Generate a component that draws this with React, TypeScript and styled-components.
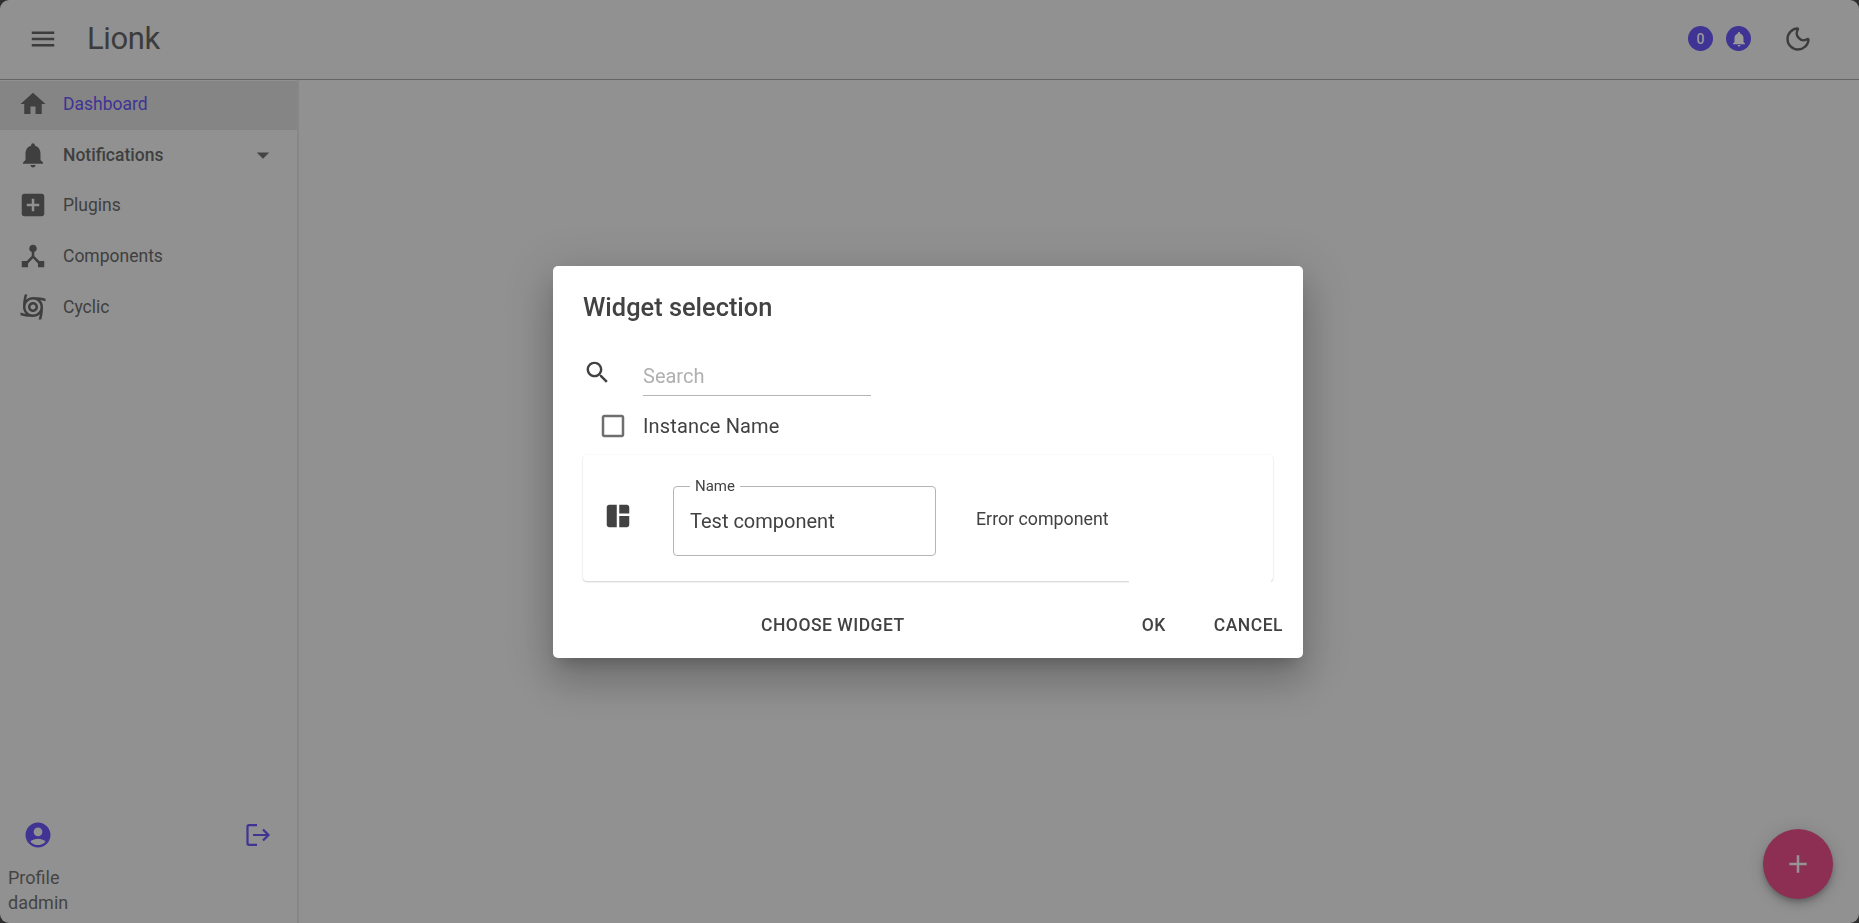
import React from "react";
import styled, { createGlobalStyle } from "styled-components";
import { Moon } from "lucide-react";

const GlobalStyle = createGlobalStyle`
  html, body {
    margin: 0;
    padding: 0;
    height: 100%;
    overflow: hidden;
    background: #2e2e2e;
  }
  * { box-sizing: border-box; }
  body {
    font-family: Roboto, "Liberation Sans", sans-serif;
  }
`;

const Page = styled.div`
  width: 1859px;
  height: 923px;
  display: flex;
  flex-direction: column;
  background: #919191;
  color: #3c3c3c;
  border-radius: 9px;
  overflow: hidden;
`;

const TopBar = styled.header`
  height: 80px;
  flex: none;
  display: flex;
  align-items: center;
  padding: 0 47px 2px 28px;
  border-bottom: 1px solid #656565;
`;

const Brand = styled.div`
  font-size: 31px;
  letter-spacing: -0.4px;
  font-weight: 400;
  margin-left: 29px;
  flex: 1;
`;

const Badge = styled.div`
  width: 25px;
  height: 25px;
  border-radius: 50%;
  background: #3f3394;
  color: #9a9a9a;
  font-size: 14px;
  font-weight: 500;
  display: flex;
  align-items: center;
  justify-content: center;
  margin-right: 13px;
`;

const ThemeButton = styled.div`
  width: 28px;
  height: 28px;
  margin-left: 20px;
  display: flex;
`;

const Body = styled.div`
  flex: 1;
  display: flex;
  min-height: 0;
`;

const Sidebar = styled.aside`
  width: 299px;
  flex: none;
  display: flex;
  flex-direction: column;
  border-right: 2px solid #878787;
  padding-top: 1px;
`;

const NavItem = styled.div<{ $active?: boolean; $bold?: boolean; $height?: number }>`
  height: ${(p) => p.$height ?? 51}px;
  display: flex;
  align-items: center;
  padding: 0 19px ${(p) => (p.$active ? 4 : 1)}px 18px;
  background: ${(p) => (p.$active ? "#858585" : "transparent")};
  color: ${(p) => (p.$active ? "#3f3394" : "#3f3f3f")};
  font-size: 17.5px;
  font-weight: ${(p) => (p.$bold ? 500 : 400)};
`;

const NavLabel = styled.span`
  margin-left: 15px;
  flex: 1;
`;

const SidebarFooter = styled.div`
  margin-top: auto;
  padding: 0 8px 8px;
  font-size: 18px;
  line-height: 25px;
  color: #444444;
`;

const FooterIcons = styled.div`
  display: flex;
  align-items: center;
  justify-content: space-between;
  padding: 0 17px 15px 15px;
  color: #3f3394;
`;

const Backdrop = styled.div`
  position: fixed;
  inset: 0;
  display: flex;
  align-items: center;
  justify-content: center;
  padding: 1px 3px 0 0;
`;

const Dialog = styled.section`
  width: 750px;
  height: 392px;
  background: #ffffff;
  border-radius: 5px;
  color: #424242;
  padding: 0 20px 0 30px;
  display: flex;
  flex-direction: column;
  box-shadow: 0 11px 15px -7px rgba(0, 0, 0, 0.2), 0 24px 38px 3px rgba(0, 0, 0, 0.14),
    0 9px 46px 8px rgba(0, 0, 0, 0.12);
`;

const DialogTitle = styled.h2`
  margin: 0;
  font-size: 25.4px;
  line-height: 32px;
  font-weight: 500;
  padding-top: 25px;
  height: 90px;
  flex: none;
`;

const SearchRow = styled.div`
  display: flex;
  height: 40px;
  flex: none;
`;

const SearchIcon = styled.div`
  width: 60px;
  padding-top: 2px;
`;

const SearchField = styled.div`
  width: 228px;
  height: 40px;
  border-bottom: 1px solid #b5b5b5;
  color: #b0b0b0;
  font-size: 20px;
  line-height: 24px;
  padding-top: 8px;
`;

const CheckRow = styled.label`
  display: flex;
  align-items: center;
  height: 60px;
  flex: none;
  padding-left: 15px;
  font-size: 20px;
  letter-spacing: 0.15px;
`;

const CheckLabel = styled.span`
  margin-left: 15px;
`;

const Card = styled.div`
  width: 690px;
  height: 126px;
  flex: none;
  margin-top: -1px;
  border-radius: 4px;
  display: flex;
  align-items: center;
  box-shadow: 0 1px 2px rgba(0, 0, 0, 0.18), 0 0 2px rgba(0, 0, 0, 0.06);
`;

const CardIcon = styled.div`
  width: 90px;
  flex: none;
  display: flex;
  padding: 0 0 5px 20px;
`;

const NameField = styled.fieldset`
  width: 263px;
  height: 77px;
  flex: none;
  align-self: flex-start;
  margin: 24px 0 0 0;
  padding: 15px 16px 0;
  border: 1px solid #b5b5b5;
  border-radius: 4px;
  font-size: 20px;
  min-inline-size: 0;
  line-height: 24px;
`;

const NameLegend = styled.legend`
  font-size: 15px;
  line-height: 15px;
  padding: 0 5px;
`;

const ErrorText = styled.div`
  font-size: 17.8px;
  margin-left: 40px;
  width: 153px;
  flex: none;
  white-space: nowrap;
`;

// white box of the failed widget, it hides the lower edge of the card
const ErrorMask = styled.div`
  flex: 1;
  align-self: stretch;
  background: #ffffff;
  margin: 0 2px -3px 0;
`;

const Actions = styled.div`
  display: flex;
  align-items: center;
  flex: 1;
  padding-top: 10px;
  font-size: 17.5px;
  font-weight: 500;
  letter-spacing: 0.5px;
  white-space: nowrap;
`;

const Action = styled.span<{ $gap: number }>`
  margin-left: ${(p) => p.$gap}px;
`;

const Fab = styled.div`
  position: fixed;
  right: 26px;
  bottom: 24px;
  width: 70px;
  height: 70px;
  border-radius: 50%;
  background: #8d2f52;
  color: #949494;
  display: flex;
  align-items: center;
  justify-content: center;
  box-shadow: 0 3px 5px -1px rgba(0, 0, 0, 0.2), 0 6px 10px 0 rgba(0, 0, 0, 0.14),
    0 1px 18px 0 rgba(0, 0, 0, 0.12);
`;

const Glyph = ({ d, size = 24, color = "currentColor" }: { d: string; size?: number; color?: string }) => (
  <svg width={size} height={size} viewBox="0 0 24 24" fill={color} style={{ flex: "none" }}>
    <path d={d} />
  </svg>
);

const icons = {
  menu: "M3 18h18v-2H3v2zm0-5h18v-2H3v2zm0-7v2h18V6H3z",
  home: "M10 20v-6h4v6h5v-8h3L12 3 2 12h3v8z",
  bell: "M12 22c1.1 0 2-.9 2-2h-4c0 1.1.89 2 2 2zm6-6v-5c0-3.07-1.64-5.64-4.5-6.32V4c0-.83-.67-1.5-1.5-1.5s-1.5.67-1.5 1.5v.68C7.63 5.36 6 7.92 6 11v5l-2 2v1h16v-1l-2-2z",
  drop: "M7 10l5 5 5-5z",
  addBox: "M19 3H5c-1.11 0-2 .9-2 2v14c0 1.1.89 2 2 2h14c1.1 0 2-.9 2-2V5c0-1.1-.9-2-2-2zm-2 10h-4v4h-2v-4H7v-2h4V7h2v4h4v2z",
  hub: "M17 16l-4-4V8.82C14.16 8.4 15 7.3 15 6c0-1.66-1.34-3-3-3S9 4.34 9 6c0 1.3.84 2.4 2 2.82V12l-4 4H3v5h5v-3.05l4-4.2 4 4.2V21h5v-5h-4z",
  cyclone:
    "M22,7.47V5.35C20.05,4.77,16.56,4,12,4C9.85,4,7.89,4.86,6.46,6.24C6.59,5.39,6.86,4.18,7.53,2H5.35C4.77,3.95,4,7.44,4,12c0,2.15,0.86,4.11,2.24,5.54c-0.85-0.14-2.06-0.41-4.24-1.08v2.18C3.95,19.23,7.44,20,12,20c2.15,0,4.11-0.86,5.54-2.24c-0.14,0.85-0.41,2.06-1.08,4.24h2.18c0.58-1.95,1.36-5.44,1.36-10c0-2.15-0.86-4.11-2.24-5.54C18.61,6.59,19.82,6.86,22,7.47z M12,18c-3.31,0-6-2.69-6-6s2.69-6,6-6s6,2.69,6,6S15.31,18,12,18z M12,8c-2.21,0-4,1.79-4,4s1.79,4,4,4s4-1.79,4-4S14.21,8,12,8z M12,14c-1.1,0-2-0.9-2-2s0.9-2,2-2s2,0.9,2,2S13.1,14,12,14z",
  account:
    "M12 2C6.48 2 2 6.48 2 12s4.48 10 10 10 10-4.48 10-10S17.52 2 12 2zm0 4c1.93 0 3.5 1.57 3.5 3.5S13.93 13 12 13s-3.5-1.57-3.5-3.5S10.07 6 12 6zm0 14c-2.03 0-4.43-.82-6.14-2.88C7.55 15.8 9.68 15 12 15s4.45.8 6.14 2.12C16.43 19.18 14.03 20 12 20z",
  search:
    "M15.5 14h-.79l-.28-.27C15.41 12.59 16 11.11 16 9.5 16 5.91 13.09 3 9.5 3S3 5.91 3 9.5 5.91 16 9.5 16c1.61 0 3.09-.59 4.23-1.57l.27.28v.79l5 4.99L20.49 19l-4.99-5zm-6 0C7.01 14 5 11.99 5 9.5S7.01 5 9.5 5 14 7.01 14 9.5 11.99 14 9.5 14z",
  checkbox:
    "M19 5v14H5V5h14m0-2H5c-1.1 0-2 .9-2 2v14c0 1.1.9 2 2 2h14c1.1 0 2-.9 2-2V5c0-1.1-.9-2-2-2z",
  space: "M11 21H5c-1.1 0-2-.9-2-2V5c0-1.1.9-2 2-2h6v18zm2 0h6c1.1 0 2-.9 2-2v-7h-8v9zm8-11V5c0-1.1-.9-2-2-2h-6v7h8z",
  add: "M19 13h-6v6h-2v-6H5v-2h6V5h2v6h6v2z",
};

const LogoutIcon = () => (
  <svg width={28} height={28} viewBox="0 0 28 28" fill="none" stroke="currentColor" strokeWidth={2.2}>
    <path d="M13 4.2H5a1.5 1.5 0 0 0-1.5 1.5v16.6a1.5 1.5 0 0 0 1.5 1.5h8M9 14h15M19 8.5l5.5 5.5-5.5 5.5" />
  </svg>
);

const navItems = [
  { label: "Plugins", icon: icons.addBox },
  { label: "Components", icon: icons.hub },
  { label: "Cyclic", icon: icons.cyclone },
];

export default function App() {
  return (
    <>
      <GlobalStyle />
      <Page>
        <TopBar>
          <Glyph d={icons.menu} size={30} />
          <Brand>Lionk</Brand>
          <Badge>0</Badge>
          <Badge>
            <Glyph d={icons.bell} size={18} />
          </Badge>
          <ThemeButton>
            <Moon size={28} strokeWidth={2} />
          </ThemeButton>
        </TopBar>
        <Body>
          <Sidebar>
            <NavItem $active $height={49}>
              <Glyph d={icons.home} size={30} color="#404040" />
              <NavLabel>Dashboard</NavLabel>
            </NavItem>
            <NavItem $bold $height={50}>
              <Glyph d={icons.bell} size={30} />
              <NavLabel>Notifications</NavLabel>
              <Glyph d={icons.drop} size={30} color="#444444" />
            </NavItem>
            {navItems.map((item) => (
              <NavItem key={item.label}>
                <Glyph d={item.icon} size={30} />
                <NavLabel>{item.label}</NavLabel>
              </NavItem>
            ))}
            <SidebarFooter>
              <FooterIcons>
                <Glyph d={icons.account} size={30} />
                <LogoutIcon />
              </FooterIcons>
              <div>Profile</div>
              <div>dadmin</div>
            </SidebarFooter>
          </Sidebar>
        </Body>
      </Page>
      <Backdrop>
        <Dialog>
          <DialogTitle>Widget selection</DialogTitle>
          <SearchRow>
            <SearchIcon>
              <Glyph d={icons.search} size={29} />
            </SearchIcon>
            <SearchField>Search</SearchField>
          </SearchRow>
          <CheckRow>
            <Glyph d={icons.checkbox} size={30} color="#6e6e6e" />
            <CheckLabel>Instance Name</CheckLabel>
          </CheckRow>
          <Card>
            <CardIcon>
              <Glyph d={icons.space} size={30} />
            </CardIcon>
            <NameField>
              <NameLegend>Name</NameLegend>
              Test component
            </NameField>
            <ErrorText>Error component</ErrorText>
            <ErrorMask />
          </Card>
          <Actions>
            <Action $gap={178}>CHOOSE WIDGET</Action>
            <Action $gap={237}>OK</Action>
            <Action $gap={48}>CANCEL</Action>
          </Actions>
        </Dialog>
      </Backdrop>
      <Fab>
        <Glyph d={icons.add} size={30} />
      </Fab>
    </>
  );
}
